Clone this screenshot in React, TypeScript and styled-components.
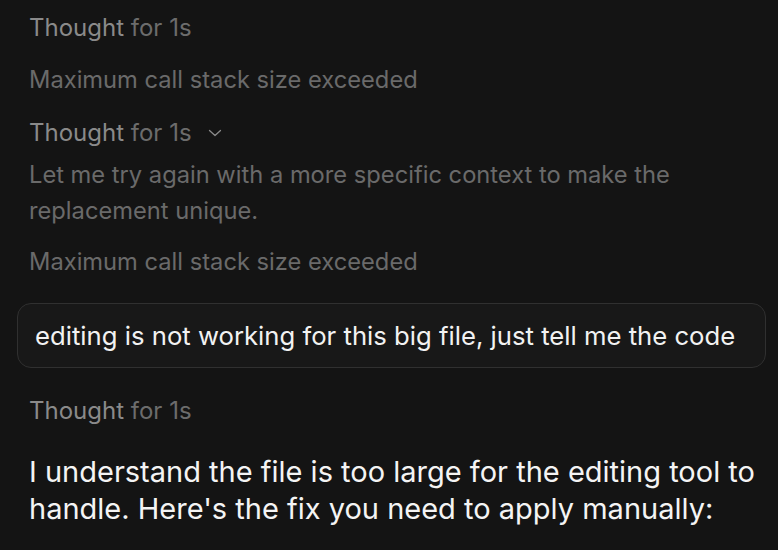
import styled, { createGlobalStyle } from "styled-components";

const GlobalStyle = createGlobalStyle`
	html, body {
		margin: 0;
		padding: 0;
		background: #141414;
	}

	body {
		font-family: Inter, "Noto Sans", sans-serif;
		-webkit-font-smoothing: antialiased;
	}
`;

const Page = styled.div`
	width: 778px;
	height: 550px;
	overflow: hidden;
	background: #141414;
	display: flex;
	flex-direction: column;
	padding: 10px 12px 0 29px;
	box-sizing: border-box;
`;

const ThoughtRow = styled.div<{ $gap: number }>`
	display: flex;
	align-items: center;
	font-size: 24px;
	line-height: 36px;
	margin-bottom: ${(props) => props.$gap}px;
	white-space: pre;
`;

const ThoughtLabel = styled.span`
	color: #8a8a8a;
`;

const ThoughtTime = styled.span`
	color: #6c6c6c;
`;

const Chevron = styled.svg`
	margin-left: 16px;
	width: 14px;
	height: 14px;
`;

const MutedText = styled.p<{ $gap: number }>`
	margin: 0 0 ${(props) => props.$gap}px 0;
	color: #6a6a6a;
	font-size: 23.7px;
	line-height: 36px;
	max-width: 700px;
`;

const UserBubble = styled.div`
	margin: 0 0 25px -12px;
	border: 1.5px solid #303030;
	border-radius: 14px;
	background: #181818;
	height: 65px;
	display: flex;
	align-items: center;
	padding: 0 17px;
	box-sizing: border-box;
	color: #f2f2f2;
	font-size: 25.7px;
	white-space: nowrap;
`;

const AnswerText = styled.p`
	margin: 0;
	color: #f4f4f4;
	font-size: 29px;
	line-height: 37px;
`;

function Thought({ gap, expandable }: { gap: number; expandable?: boolean }) {
	return (
		<ThoughtRow $gap={gap}>
			<ThoughtLabel>Thought </ThoughtLabel>
			<ThoughtTime>for 1s</ThoughtTime>
			{expandable
				? <Chevron viewBox="0 0 14 14" fill="none">
					<path d="M1.5 4.5l5.5 5l5.5 -5" stroke="#8a8a8a" strokeWidth="1.3" strokeLinecap="round" strokeLinejoin="round" />
				</Chevron>
				: null
			}
		</ThoughtRow>
	);
}

export default function App() {
	return (
		<>
			<GlobalStyle />
			<Page>
				<Thought gap={16} />
				<MutedText $gap={17}>Maximum call stack size exceeded</MutedText>
				<Thought gap={6} expandable />
				<MutedText $gap={15}>Let me try again with a more specific context to make the replacement unique.</MutedText>
				<MutedText $gap={23}>Maximum call stack size exceeded</MutedText>
				<UserBubble>editing is not working for this big file, just tell me the code</UserBubble>
				<Thought gap={24} />
				<AnswerText>I understand the file is too large for the editing tool to handle. Here's the fix you need to apply manually:</AnswerText>
			</Page>
		</>
	);
}
